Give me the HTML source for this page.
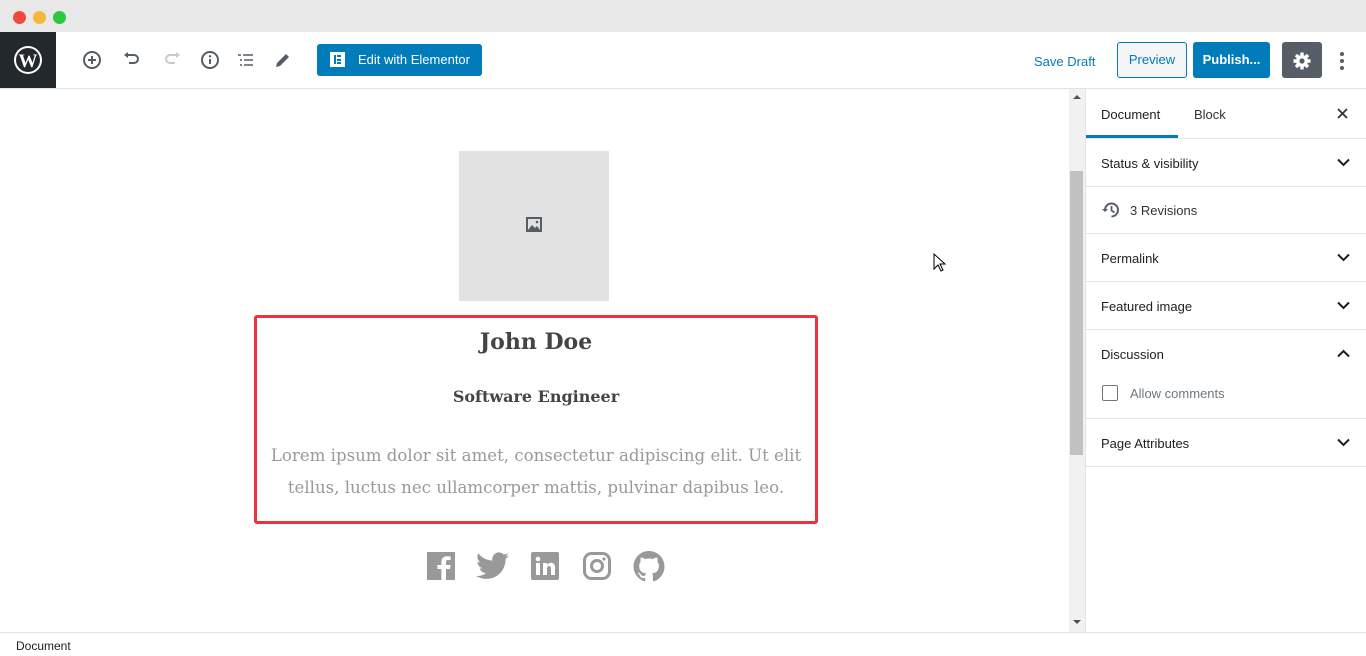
<!DOCTYPE html>
<html><head><meta charset="utf-8"><style>
*{box-sizing:border-box;margin:0;padding:0}
body{width:1366px;height:656px;overflow:hidden;background:#fff;font-family:"Liberation Sans",sans-serif;position:relative;color:#1e1e1e}
.abs{position:absolute}
.dot{position:absolute;top:11px;width:13px;height:13px;border-radius:50%}
.ico{position:absolute;top:49px}
.side-row{position:absolute;left:1086px;width:280px;border-bottom:1px solid #e2e4e7;font-size:13px;color:#1e1e1e}
.side-row span{position:absolute;left:15px}
.chev{position:absolute;right:16px}
</style></head><body>
<div class="abs" style="left:0;top:0;width:1366px;height:32px;background:#e8e8e8"></div>
<div class="dot" style="left:13px;background:#ee4b3e"></div>
<div class="dot" style="left:33px;background:#f5b83a"></div>
<div class="dot" style="left:53px;background:#2ec740"></div>
<div class="abs" style="left:0;top:32px;width:56px;height:56px;background:#23282d"></div>
<svg class="abs" style="left:13px;top:45px" width="30" height="30" viewBox="0 0 30 30"><circle cx="15" cy="15" r="14" fill="#fff"/><circle cx="15" cy="15" r="12" fill="#23282d"/><text x="15" y="22" text-anchor="middle" font-family="Liberation Serif" font-weight="bold" font-size="19" fill="#fff">W</text></svg>
<div class="abs" style="left:0;top:88px;width:1366px;height:1px;background:#e2e4e7"></div>
<svg class="ico" style="left:82px" width="20" height="22" viewBox="0 0 20 20"><circle cx="10" cy="10" r="8" fill="none" stroke="#555d66" stroke-width="2"/><path d="M10 6v8M6 10h8" stroke="#555d66" stroke-width="2"/></svg>
<svg class="ico" style="left:122px" width="20" height="22" viewBox="0 0 20 20"><path d="M5 5h7a4 4 0 010 8H7" fill="none" stroke="#555d66" stroke-width="2"/><path d="M2 5l4-3v6z" fill="#555d66"/></svg>
<svg class="ico" style="left:162px" width="20" height="22" viewBox="0 0 20 20"><path d="M15 5H8a4 4 0 000 8h5" fill="none" stroke="#c8cbce" stroke-width="2"/><path d="M18 5l-4-3v6z" fill="#c8cbce"/></svg>
<svg class="ico" style="left:200px" width="20" height="22" viewBox="0 0 20 20"><circle cx="10" cy="10" r="8" fill="none" stroke="#555d66" stroke-width="2"/><path d="M10 9v5" stroke="#555d66" stroke-width="2"/><circle cx="10" cy="6.3" r="1.2" fill="#555d66"/></svg>
<svg class="ico" style="left:236px" width="20" height="22" viewBox="0 0 20 20"><path d="M2 5h3M7 5h10M4 10h2M8 10h9M4 15h2M8 15h9" stroke="#555d66" stroke-width="1.6"/></svg>
<svg class="ico" style="left:273px" width="20" height="22" viewBox="0 0 20 20"><path d="M3 17l1-4 9-9 3 3-9 9z" fill="#555d66"/></svg>
<div class="abs" style="left:317px;top:44px;width:165px;height:32px;background:#007cba;border-radius:3px;color:#fff;font-size:13px;line-height:32px">
<span class="abs" style="left:13px;top:8px;width:15px;height:15px;background:#fff"><span class="abs" style="left:4px;top:3px;width:2px;height:9px;background:#007cba"></span><span class="abs" style="left:7px;top:3px;width:4px;height:2px;background:#007cba"></span><span class="abs" style="left:7px;top:6.5px;width:4px;height:2px;background:#007cba"></span><span class="abs" style="left:7px;top:10px;width:4px;height:2px;background:#007cba"></span></span>
<span class="abs" style="left:41px">Edit with Elementor</span></div>
<div class="abs" style="left:1034px;top:54px;font-size:13px;color:#007cba">Save Draft</div>
<div class="abs" style="left:1117px;top:42px;width:70px;height:36px;border:1px solid #007cba;border-radius:3px;background:#f3f5f6;color:#007cba;font-size:13px;text-align:center;line-height:34px">Preview</div>
<div class="abs" style="left:1193px;top:42px;width:77px;height:36px;background:#007cba;border-radius:3px;color:#fff;font-size:13px;font-weight:bold;text-align:center;line-height:36px">Publish...</div>
<div class="abs" style="left:1282px;top:42px;width:40px;height:36px;background:#555d66;border-radius:3px"></div>
<svg class="abs" style="left:1292px;top:51px" width="20" height="20" viewBox="0 0 20 20"><g fill="#fff"><circle cx="10" cy="10" r="6"/><g stroke="#fff" stroke-width="3.4"><path d="M10 1.5v17M1.5 10h17M4 4l12 12M16 4L4 16"/></g></g><circle cx="10" cy="10" r="2.6" fill="#555d66"/></svg>
<div class="abs" style="left:1340px;top:52px;width:4px;height:4px;border-radius:2px;background:#555d66;box-shadow:0 7px 0 #555d66,0 14px 0 #555d66"></div>
<div class="abs" style="left:1069px;top:89px;width:16px;height:543px;background:#f1f1f1"></div>
<div class="abs" style="left:1070px;top:171px;width:13px;height:284px;background:#c1c1c1"></div>
<div class="abs" style="left:1073px;top:95px;border:4px solid transparent;border-bottom:4px solid #505050;border-top:0"></div>
<div class="abs" style="left:1073px;top:620px;border:4px solid transparent;border-top:4px solid #505050;border-bottom:0"></div>
<div class="abs" style="left:1085px;top:89px;width:1px;height:543px;background:#e2e4e7"></div>
<div class="abs" style="left:459px;top:151px;width:150px;height:150px;background:#e2e2e2"></div>
<svg class="abs" style="left:525px;top:216px" width="18" height="17" viewBox="0 0 18 17"><rect x="1" y="1" width="16" height="15" fill="#555d66"/><rect x="3" y="3" width="12" height="11" fill="#e2e2e2"/><path d="M3 14l4-5 3 3 2-2 3 4z" fill="#555d66"/><circle cx="12" cy="6" r="1.3" fill="#555d66"/></svg>
<div class="abs" style="left:254px;top:315px;width:564px;height:209px;border:3px solid #e9343d;border-radius:3px;font-family:'DejaVu Serif','Liberation Serif',serif;text-align:center">
<div class="abs" style="left:0;width:558px;top:11px;font-size:22px;font-weight:bold;color:#444">John Doe</div>
<div class="abs" style="left:0;width:558px;top:69px;font-size:16px;font-weight:bold;color:#444">Software Engineer</div>
<div class="abs" style="left:0;width:558px;top:122px;font-size:16.6px;line-height:32px;color:#999">Lorem ipsum dolor sit amet, consectetur adipiscing elit. Ut elit tellus, luctus nec ullamcorper mattis, pulvinar dapibus leo.</div>
</div>
<svg class="abs" style="left:427px;top:552px" width="28" height="28" viewBox="0 0 28 28"><rect width="28" height="28" fill="#999"/><path d="M19 28V17h4l.6-4H19v-3c0-1.2.4-2 2-2h2.6V4.5c-.5 0-2-.2-3.6-.2-3.5 0-5.6 2-5.6 5.8V13h-4v4h4v11z" fill="#fff"/></svg>
<svg class="abs" style="left:476px;top:552px" width="33" height="28" viewBox="0 0 24 20"><path d="M24 2.4c-.9.4-1.8.6-2.8.8 1-.6 1.8-1.6 2.2-2.7-1 .6-2 1-3.1 1.2A4.9 4.9 0 0011.9 6 14 14 0 011.7.8a4.9 4.9 0 001.5 6.6c-.8 0-1.6-.3-2.2-.6 0 2.4 1.7 4.4 3.9 4.8-.7.2-1.5.2-2.2.1.6 2 2.4 3.4 4.6 3.4A9.9 9.9 0 010 17.2 14 14 0 007.5 19.4c9.1 0 14-7.5 14-14v-.6c1-.7 1.8-1.6 2.5-2.4z" fill="#999"/></svg>
<svg class="abs" style="left:531px;top:552px" width="28" height="28" viewBox="0 0 28 28"><rect width="28" height="28" rx="2" fill="#999"/><rect x="5" y="11" width="4" height="12" fill="#fff"/><circle cx="7" cy="7" r="2.3" fill="#fff"/><path d="M12 11h4v2c.8-1.4 2.3-2.3 4-2.3 3 0 4 2 4 5V23h-4v-6.5c0-1.5-.5-2.5-1.9-2.5S16 15 16 16.5V23h-4z" fill="#fff"/></svg>
<svg class="abs" style="left:583px;top:552px" width="28" height="28" viewBox="0 0 28 28"><rect x="1.5" y="1.5" width="25" height="25" rx="7" fill="none" stroke="#999" stroke-width="3"/><circle cx="14" cy="14" r="5.5" fill="none" stroke="#999" stroke-width="3"/><circle cx="21" cy="7" r="1.6" fill="#999"/></svg>
<svg class="abs" style="left:633px;top:551px" width="32" height="31" viewBox="0 0 16 16"><path fill="#999" d="M8 0C3.58 0 0 3.58 0 8c0 3.54 2.29 6.53 5.47 7.59.4.07.55-.17.55-.38v-1.33c-2.23.48-2.7-1.07-2.7-1.07-.36-.92-.89-1.17-.89-1.17-.73-.5.06-.49.06-.49.8.06 1.23.83 1.23.83.71 1.22 1.87.87 2.33.66.07-.52.28-.87.51-1.07-1.78-.2-3.64-.89-3.64-3.95 0-.87.31-1.59.82-2.15-.08-.2-.36-1.02.08-2.12 0 0 .67-.21 2.2.82a7.6 7.6 0 014 0c1.53-1.04 2.2-.82 2.2-.82.44 1.1.16 1.92.08 2.12.51.56.82 1.27.82 2.15 0 3.07-1.87 3.75-3.65 3.95.29.25.54.73.54 1.48v2.2c0 .21.15.46.55.38A8 8 0 0016 8c0-4.42-3.58-8-8-8z"/></svg>
<div class="abs" style="left:0;top:632px;width:1366px;height:1px;background:#e2e4e7"></div>
<div class="abs" style="left:16px;top:639px;font-size:12px;color:#1e1e1e">Document</div>
<div class="side-row" style="top:89px;height:50px;background:#fff"><span style="top:18px">Document</span><span style="left:108px;top:18px;color:#333">Block</span><span class="abs" style="left:0;top:46px;width:92px;height:3px;background:#007cba"></span>
<svg class="chev" style="top:19px;right:18px" width="11" height="11" viewBox="0 0 11 11"><path d="M1 1l9 9M10 1l-9 9" stroke="#333" stroke-width="1.8"/></svg></div>
<div class="side-row" style="top:139px;height:48px"><span style="top:17px">Status &amp; visibility</span><svg class="chev" style="top:19px" width="13" height="9" viewBox="0 0 13 9"><path d="M1 1.5l5.5 5.5 5.5-5.5" fill="none" stroke="#1e1e1e" stroke-width="2"/></svg></div>
<div class="side-row" style="top:187px;height:47px"><svg class="abs" style="left:15px;top:13px" width="20" height="20" viewBox="0 0 20 20"><path d="M4 10a6.5 6.5 0 116.5 6.5" fill="none" stroke="#555d66" stroke-width="2"/><path d="M1 9l3 3 3-3z" fill="#555d66"/><path d="M10.5 6v4.5l3 2" fill="none" stroke="#555d66" stroke-width="1.8"/></svg><span style="left:44px;top:16px;color:#333">3 Revisions</span></div>
<div class="side-row" style="top:234px;height:48px"><span style="top:17px">Permalink</span><svg class="chev" style="top:19px" width="13" height="9" viewBox="0 0 13 9"><path d="M1 1.5l5.5 5.5 5.5-5.5" fill="none" stroke="#1e1e1e" stroke-width="2"/></svg></div>
<div class="side-row" style="top:282px;height:48px"><span style="top:17px">Featured image</span><svg class="chev" style="top:19px" width="13" height="9" viewBox="0 0 13 9"><path d="M1 1.5l5.5 5.5 5.5-5.5" fill="none" stroke="#1e1e1e" stroke-width="2"/></svg></div>
<div class="side-row" style="top:330px;height:89px"><span style="top:17px">Discussion</span><svg class="chev" style="top:19px" width="13" height="9" viewBox="0 0 13 9"><path d="M1 7.5l5.5-5.5 5.5 5.5" fill="none" stroke="#1e1e1e" stroke-width="2"/></svg>
<span class="abs" style="left:16px;top:55px;width:16px;height:16px;border:1px solid #6c7781;border-radius:2px"></span><span style="left:44px;top:56px;color:#6c7781">Allow comments</span></div>
<div class="side-row" style="top:419px;height:48px"><span style="top:17px">Page Attributes</span><svg class="chev" style="top:19px" width="13" height="9" viewBox="0 0 13 9"><path d="M1 1.5l5.5 5.5 5.5-5.5" fill="none" stroke="#1e1e1e" stroke-width="2"/></svg></div>
<svg class="abs" style="left:933px;top:253px" width="13" height="20" viewBox="0 0 13 20"><path d="M1 1v15l4-4 3 6 2-1-3-6h5z" fill="#fff" stroke="#000" stroke-width="1"/></svg>
</body></html>
